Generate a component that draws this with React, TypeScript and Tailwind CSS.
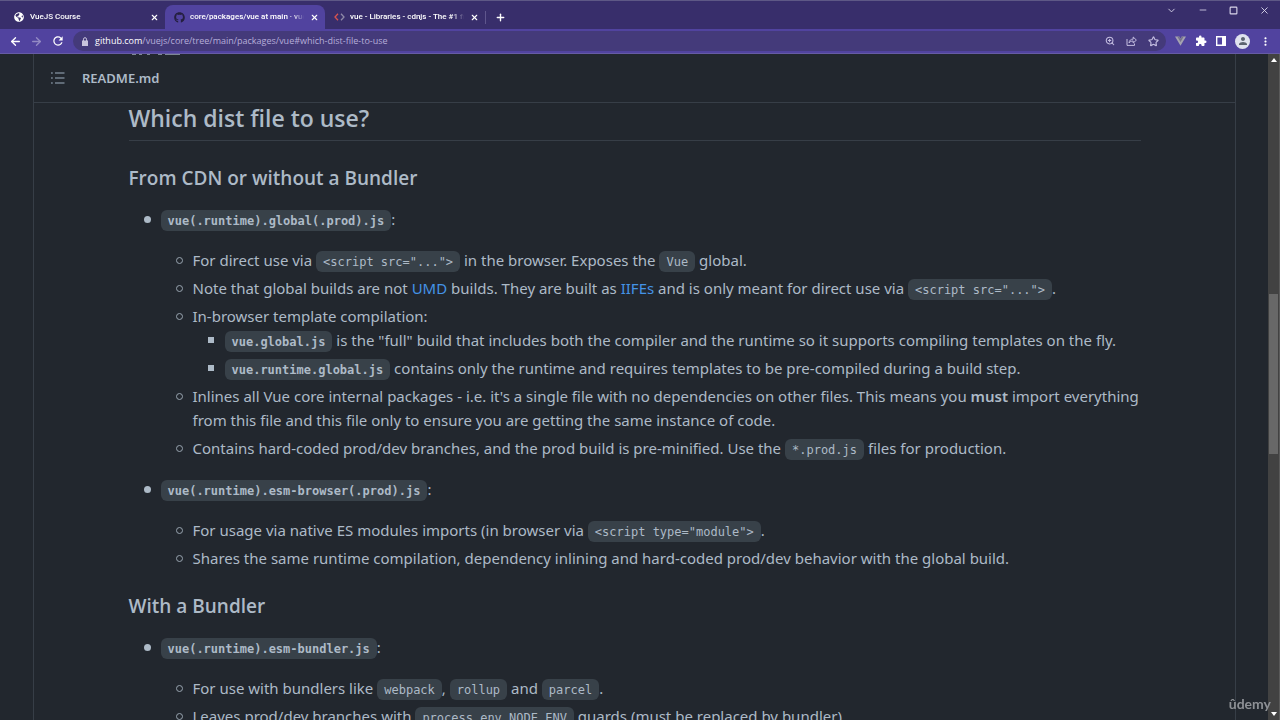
import type { ReactNode } from "react";
import { ZoomIn, Star, X, Plus, ArrowLeft, ArrowRight, Minus, Square, ChevronDown } from "lucide-react";
import { FaGithub, FaGlobeAmericas } from "react-icons/fa";
import { MdExtension, MdRefresh, MdMoreVert, MdPerson } from "react-icons/md";

function Code({ children, bold = false }: { children: ReactNode; bold?: boolean }) {
  return (
    <code
      className={
        (bold ? "font-bold " : "") +
        "inline-block h-[21px] rounded-md bg-[#384149] px-[7px] align-middle font-['DejaVu_Sans_Mono',monospace] text-[12px] leading-[22px] whitespace-pre"
      }
    >
      {children}
    </code>
  );
}

function Item({ marker, children }: { marker: "disc" | "circle" | "square"; children: ReactNode }) {
  return (
    <li className="flex items-start">
      <span className="flex h-6 w-8 shrink-0 items-center justify-center pl-[5px]" aria-hidden="true">
        {marker === "disc" && <span className="size-[7px] rounded-full bg-[#adbac7]" />}
        {marker === "circle" && <span className="size-[7px] rounded-full border border-[#98a4b0]" />}
        {marker === "square" && <span className="size-[6px] bg-[#adbac7]" />}
      </span>
      <div className="min-w-0 flex-1">{children}</div>
    </li>
  );
}

function Tab({ icon, title, active = false }: { icon: ReactNode; title: string; active?: boolean }) {
  return (
    <div
      className={
        "flex h-6 w-40 items-center rounded-t-lg pr-[5px] pl-2 " + (active ? "bg-[#51439f]" : "")
      }
    >
      <span className="flex w-3 shrink-0 justify-center">{icon}</span>
      <a
        href="#tab"
        className="ml-[5px] min-w-0 flex-1 overflow-hidden mask-r-from-90% font-['Roboto',sans-serif] text-[8px] leading-4 font-medium whitespace-nowrap text-white"
      >
        {title}
      </a>
      <button aria-label={"Close " + title} className="ml-1 flex size-3 items-center justify-center text-white">
        <X size={9} strokeWidth={3} />
      </button>
    </div>
  );
}

export default function App() {
  return (
    <div className="flex h-screen flex-col overflow-hidden bg-[#22272e] font-['Open_Sans','Noto_Sans',sans-serif] text-[#adbac7]">
      <header className="shrink-0">
        <div className="flex h-[29px] items-end border-t border-[#5e5886] bg-[#382e6b] pl-[5px]">
          <Tab icon={<FaGlobeAmericas size={10} color="#fff" />} title="VueJS Course" />
          <Tab active icon={<FaGithub size={11} color="#241f3f" />} title="core/packages/vue at main · vuejs/core" />
          <Tab
            icon={
              <svg width="11" height="8" viewBox="0 0 11 8" fill="none" strokeWidth="1.3">
                <path d="M4 .8 1 4l3 3.2" stroke="#d9534f" />
                <path d="m7 .8 3 3.2-3 3.2" stroke="#8f8aa8" />
              </svg>
            }
            title="vue - Libraries - cdnjs - The #1 free CDN"
          />
          <span className="mb-[5px] h-[13px] w-px bg-[#5f568d]" />
          <button aria-label="New tab" className="flex h-6 w-7 items-center justify-center text-white">
            <Plus size={11} strokeWidth={3} />
          </button>
          <div className="ml-auto flex h-full items-start text-[#d9d5ea]">
            <button aria-label="Search tabs" className="flex h-[18px] w-[31px] items-center justify-center"><ChevronDown size={11} /></button>
            <button aria-label="Minimize" className="flex h-[18px] w-[31px] items-center justify-center"><Minus size={10} /></button>
            <button aria-label="Maximize" className="flex h-[18px] w-[31px] items-center justify-center"><Square size={9} strokeWidth={3} /></button>
            <button aria-label="Close window" className="flex h-[18px] w-[31px] items-center justify-center"><X size={11} /></button>
          </div>
        </div>
        <div className="flex h-[25px] items-center border-b border-[#665ba5] bg-[#51439f] pr-2 pl-2">
          <button aria-label="Back" className="flex w-[15px] justify-center text-white"><ArrowLeft size={13} strokeWidth={2.5} /></button>
          <button aria-label="Forward" className="ml-[6px] flex w-[15px] justify-center text-[#938ac4]"><ArrowRight size={13} strokeWidth={2.5} /></button>
          <button aria-label="Reload" className="ml-[6px] flex w-[15px] justify-center text-white"><MdRefresh size={14} /></button>
          <div className="ml-2 flex h-5 min-w-0 flex-1 items-center rounded-full bg-[#443a7a] pr-[7px] pl-2">
            <svg width="8" height="9" viewBox="0 0 8 9" fill="#c9c4dd"><path d="M1 3.5h6V9H1z" /><path d="M2.5 4V2.2a1.5 1.5 0 0 1 3 0V4" fill="none" stroke="#c9c4dd" /></svg>
            <a href="#url" className="ml-[6px] flex-1 text-[9px] leading-4 text-[#b5add9]">
              <span className="text-white">github.com</span>/vuejs/core/tree/main/packages/vue#which-dist-file-to-use
            </a>
            <div className="flex items-center gap-[11px] text-[#c3bde0]">
              <button aria-label="Zoom"><ZoomIn size={10} strokeWidth={2.5} /></button>
              <button aria-label="Share">
                <svg width="11" height="10" viewBox="0 0 11 10" fill="none" stroke="currentColor"><path d="M1 3v6.4h7.5V7.5M3 7c.3-2.600 1.800-3.900 4.200-3.900V1l3.200 3.100L7.200 7V5C5.200 5 4 5.600 3 7Z" /></svg>
              </button>
              <button aria-label="Bookmark"><Star size={11} strokeWidth={2.5} /></button>
            </div>
          </div>
          <div className="ml-[9px] flex items-center gap-[9px] text-white">
            <button aria-label="Vue devtools">
              <svg width="11" height="10" viewBox="0 0 11 10"><path d="M0 .5h4.200L5.500 2.700 6.800.5H11L5.500 9.800z" fill="#a5a3b0" /><path d="M2.200.5h2L5.500 2.700 6.800.5h2L5.500 6z" fill="#77738d" /></svg>
            </button>
            <button aria-label="Extensions"><MdExtension size={12} /></button>
            <button aria-label="Side panel">
              <svg width="10" height="10" viewBox="0 0 10 10"><path d="M.7.7h8.600v8.600H.7z" fill="none" stroke="#fff" strokeWidth="1.400" /><path d="M6 1h3.500v8H6z" fill="#fff" /></svg>
            </button>
            <button aria-label="Profile" className="flex size-[15px] items-center justify-center rounded-full bg-[#dfe2ee] text-[#5c6370]"><MdPerson size={12} /></button>
            <button aria-label="Menu"><MdMoreVert size={13} /></button>
          </div>
        </div>
      </header>

      <div className="flex min-h-0 flex-1">
        <main className="relative ml-[33px] mr-8 min-w-0 flex-1 overflow-hidden border-x border-[#373e47]">
          <svg className="absolute top-0 left-[97px]" width="50" height="1" viewBox="0 0 50 1" stroke="#7d8893" aria-hidden="true">
            <path d="M1 .5h4M8 .5h3M16 .5h3M27 .5h4M34 .5h15" />
          </svg>
          <div className="flex h-[49px] items-center border-b border-[#373e47] pl-4">
            <button aria-label="Outline" className="text-[#768390]">
              <svg width="16" height="14" viewBox="0 0 16 14" fill="none" stroke="currentColor"><path d="M5 2h9.500M5 7h9.500M5 12h9.500" strokeWidth="1.300" /><path d="M1 2h1.800M1 7h1.800M1 12h1.800" strokeWidth="1.700" /></svg>
            </button>
            <a href="#readme" className="ml-4 font-['Noto_Sans',sans-serif] text-[13px] leading-5 font-semibold">README.md</a>
          </div>
          <article className="mx-auto max-w-[1012px] font-['Noto_Sans','Open_Sans',sans-serif] text-[15px] leading-6">
            <h2 className="mb-[25px] border-b border-[#373e47] pb-[7px] font-['Open_Sans',sans-serif] text-[23px] leading-[30px] font-semibold">Which dist file to use?</h2>
            <h3 className="mb-[17px] font-['Open_Sans',sans-serif] text-[19px] font-semibold">From CDN or without a Bundler</h3>
            <ul className="flex flex-col gap-[17px]">
              <Item marker="disc">
                <p className="h-6"><Code bold>vue(.runtime).global(.prod).js</Code>:</p>
                <ul className="mt-[17px] flex flex-col gap-1">
                  <Item marker="circle"><p className="h-6">For direct use via <Code>{'<script src="...">'}</Code> in the browser. Exposes the <Code>Vue</Code> global.</p></Item>
                  <Item marker="circle"><p className="h-6">Note that global builds are not <a href="#umd" className="text-[#4493e6]">UMD</a> builds. They are built as <a href="#iife" className="text-[#4493e6]">IIFEs</a> and is only meant for direct use via <Code>{'<script src="...">'}</Code>.</p></Item>
                  <Item marker="circle">
                    <p>In-browser template compilation:</p>
                    <ul className="flex flex-col gap-1">
                      <Item marker="square"><p className="h-6"><Code bold>vue.global.js</Code> is the "full" build that includes both the compiler and the runtime so it supports compiling templates on the fly.</p></Item>
                      <Item marker="square"><p className="h-6"><Code bold>vue.runtime.global.js</Code> contains only the runtime and requires templates to be pre-compiled during a build step.</p></Item>
                    </ul>
                  </Item>
                  <Item marker="circle"><p>Inlines all Vue core internal packages - i.e. it's a single file with no dependencies on other files. This means you <strong className="font-semibold">must</strong> import everything from this file and this file only to ensure you are getting the same instance of code.</p></Item>
                  <Item marker="circle"><p className="h-6">Contains hard-coded prod/dev branches, and the prod build is pre-minified. Use the <Code>*.prod.js</Code> files for production.</p></Item>
                </ul>
              </Item>
              <Item marker="disc">
                <p className="h-6"><Code bold>vue(.runtime).esm-browser(.prod).js</Code>:</p>
                <ul className="mt-[17px] flex flex-col gap-1">
                  <Item marker="circle"><p className="h-6">For usage via native ES modules imports (in browser via <Code>{'<script type="module">'}</Code>.</p></Item>
                  <Item marker="circle"><p>Shares the same runtime compilation, dependency inlining and hard-coded prod/dev behavior with the global build.</p></Item>
                </ul>
              </Item>
            </ul>
            <h3 className="mt-6 mb-[17px] font-['Open_Sans',sans-serif] text-[19px] font-semibold">With a Bundler</h3>
            <ul>
              <Item marker="disc">
                <p className="h-6"><Code bold>vue(.runtime).esm-bundler.js</Code>:</p>
                <ul className="mt-[17px] flex flex-col gap-1">
                  <Item marker="circle"><p className="h-6">For use with bundlers like <Code>webpack</Code>, <Code>rollup</Code> and <Code>parcel</Code>.</p></Item>
                  <Item marker="circle"><p className="h-6">Leaves prod/dev branches with <Code>process.env.NODE_ENV</Code> guards (must be replaced by bundler)</p></Item>
                </ul>
              </Item>
            </ul>
          </article>
        </main>
        <div className="flex w-3 shrink-0 flex-col items-center border-r border-[#5a5a5a] bg-[#424242]" aria-hidden="true">
          <svg className="mt-1 shrink-0" width="6" height="4" viewBox="0 0 6 4"><path d="M3 0 6 4H0z" fill="#fff" /></svg>
          <span className="mt-[232px] h-[160px] w-[9px] shrink-0 bg-[#686868]" />
          <svg className="mt-auto mb-1 shrink-0" width="6" height="4" viewBox="0 0 6 4"><path d="M0 0h6L3 4z" fill="#fff" /></svg>
        </div>
      </div>
      <div className="fixed right-[9px] bottom-[6px] font-['Lato',sans-serif] text-[14px] leading-5 font-bold text-[#8d9095]">ûdemy</div>
    </div>
  );
}
